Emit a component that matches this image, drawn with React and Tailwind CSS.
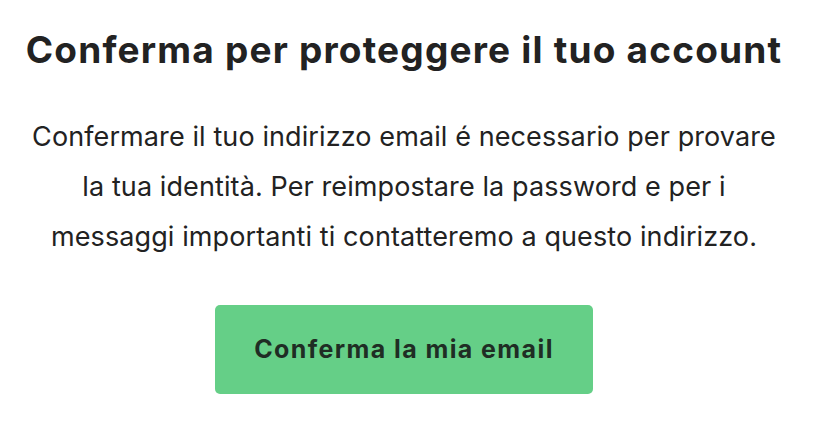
import React from 'react';

const App = () => {
    return (
        <div className="w-[818px] h-[430px] bg-white font-['Inter',sans-serif] text-[#222222]">
            <div className="w-[808px] flex flex-col items-center">
                <h1 className="mt-[28px] text-[37px] leading-[44px] font-bold tracking-[1.2px] whitespace-nowrap">
                    Conferma per proteggere il tuo account
                </h1>
                <p className="mt-[40px] text-center text-[27px] leading-[50px] tracking-[0.1px] whitespace-nowrap">
                    Confermare il tuo indirizzo email é necessario per provare
                    <br />
                    la tua identità. Per reimpostare la password e per i
                    <br />
                    messaggi importanti ti contatteremo a questo indirizzo.
                </p>
                <button className="mt-[43px] w-[378px] h-[89px] rounded-[5px] bg-[#65cf87] text-[#1f2d24] text-[25px] font-bold tracking-[1.4px]">
                    Conferma la mia email
                </button>
            </div>
        </div>
    );
};

export default App;
